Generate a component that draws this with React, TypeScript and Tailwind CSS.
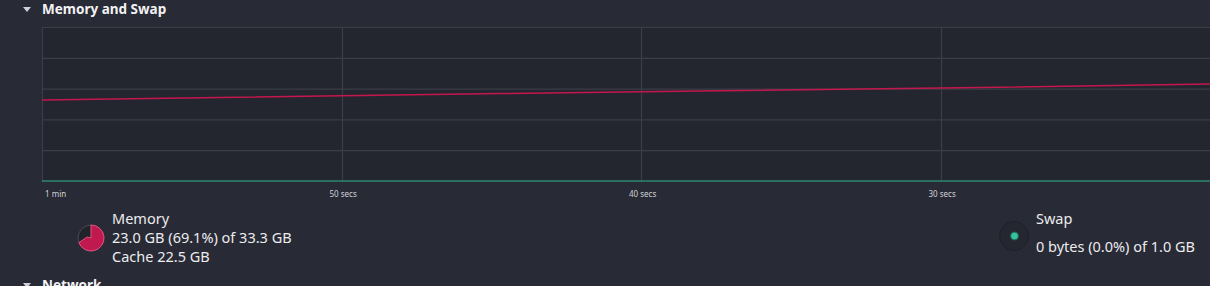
import React from 'react'

const GRAPH_W = 1198
const GRAPH_H = 155

const memPoints: [number, number][] = [
  [0, 73],
  [458, 66.5],
  [658, 64],
  [938, 60.5],
  [1168, 57],
  [1198, 56.5],
]

function SectionHeader({ title }: { title: string }) {
  return (
    <div className="flex items-center h-[18px]">
      <svg width="8" height="5" viewBox="0 0 8 5" className="ml-[23px] mr-[11px]">
        <polygon points="0,0 8,0 4,5" fill="#d0d1d6" />
      </svg>
      <span className="text-[13.5px] font-bold text-[#f2f2f4] leading-[18px]">{title}</span>
    </div>
  )
}

function Graph() {
  const hLines = [0, 1, 2, 3, 4].map((i) => 0.5 + (i * (GRAPH_H - 1)) / 5)
  const vLines = [0, 1, 2, 3].map((i) => 0.5 + Math.round((i * GRAPH_W) / 4))
  return (
    <div className="ml-[42px] w-[1198px] h-[155px] bg-[#24262f]">
      <svg width={GRAPH_W} height={GRAPH_H} className="block">
        {hLines.map((y) => (
          <line key={y} x1={0} x2={GRAPH_W} y1={y} y2={y} stroke="#3b3d47" strokeWidth={1.2} />
        ))}
        {vLines.map((x) => (
          <line key={x} x1={x} x2={x} y1={0} y2={GRAPH_H} stroke="#3b3d47" strokeWidth={1.2} />
        ))}
        <polyline
          points={memPoints.map((p) => p.join(',')).join(' ')}
          fill="none"
          stroke="#c4174d"
          strokeWidth={1.5}
        />
        <line x1={0} x2={GRAPH_W} y1={GRAPH_H - 1} y2={GRAPH_H - 1} stroke="#2b8a72" strokeWidth={1.5} />
      </svg>
    </div>
  )
}

function AxisLabels() {
  return (
    <div className="ml-[42px] w-[1198px] grid grid-cols-4 h-[12px] mt-[6px] text-[8px] leading-[12px] text-[#d2d3d8]">
      <div className="pl-[3px]">1 min</div>
      <div className="-ml-[12px]">50 secs</div>
      <div className="-ml-[12px]">40 secs</div>
      <div className="-ml-[12px]">30 secs</div>
    </div>
  )
}

function MemoryPie({ percent }: { percent: number }) {
  const r = 13
  const c = 14
  const a = (percent / 100) * 2 * Math.PI
  const ex = c + r * Math.sin(a)
  const ey = c - r * Math.cos(a)
  const large = percent > 50 ? 1 : 0
  return (
    <svg width="28" height="28" viewBox="0 0 28 28">
      <circle cx={c} cy={c} r={r} fill="#21232b" stroke="#4a4c55" strokeWidth={1} />
      <path
        d={`M ${c} ${c} L ${c} ${c - r} A ${r} ${r} 0 ${large} 1 ${ex} ${ey} L ${c - 4} ${c - 1} Z`}
        fill="#c0194f"
        stroke="#e2507c"
        strokeWidth={1}
        strokeLinejoin="round"
      />
    </svg>
  )
}

function SwapDot() {
  return (
    <svg width="30" height="30" viewBox="0 0 30 30">
      <circle cx="15" cy="15" r="14.5" fill="#252730" stroke="#1f2128" strokeWidth={1} />
      <circle cx="15.5" cy="15" r="4" fill="#35c29e" stroke="#1d5e50" strokeWidth={1} />
    </svg>
  )
}

export default function App() {
  return (
    <div
      className="w-[1210px] h-[286px] overflow-hidden bg-[#282a35] text-[#ececef]"
      style={{ fontFamily: '"Noto Sans", "Open Sans", sans-serif' }}
    >
      <SectionHeader title="Memory and Swap" />
      <div className="mt-[9px]">
        <Graph />
      </div>
      <AxisLabels />
      <div className="flex mt-[9px] text-[14.5px] leading-[19px]">
        <div className="w-[999px] pl-[77px] flex items-center gap-[7px]">
          <MemoryPie percent={69.1} />
          <div>
            <div>Memory</div>
            <div>23.0 GB (69.1%) of 33.3 GB</div>
            <div>Cache 22.5 GB</div>
          </div>
        </div>
        <div className="flex items-start gap-[7px]">
          <div className="mt-[12px]">
            <SwapDot />
          </div>
          <div className="flex flex-col gap-[9px]">
            <div>Swap</div>
            <div>0 bytes (0.0%) of 1.0 GB</div>
          </div>
        </div>
      </div>
      <div className="mt-[10px]">
        <SectionHeader title="Network" />
      </div>
    </div>
  )
}
